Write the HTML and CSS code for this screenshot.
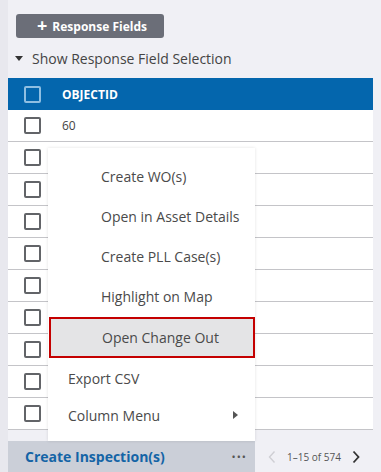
FILE: index.html
```html
<!DOCTYPE html>
<html lang="en">
<head>
    <meta charset="UTF-8">
    <meta name="viewport" content="width=device-width, initial-scale=1.0">
    <title>Response Grid</title>
    <link rel="stylesheet" href="styles.css">
</head>
<body>
    <div class="panel">
        <div class="toolbar">
            <button class="add-btn"><span class="plus">+</span> Response Fields</button>
        </div>
        <div class="toggle"><span class="caret"></span>Show Response Field Selection</div>

        <div class="grid">
            <div class="row head">
                <span class="check"></span>
                <span class="cell">OBJECTID</span>
            </div>
            <div class="row"><span class="check"></span><span class="cell">60</span></div>
            <div class="row"><span class="check"></span><span class="cell"></span></div>
            <div class="row"><span class="check"></span><span class="cell"></span></div>
            <div class="row"><span class="check"></span><span class="cell"></span></div>
            <div class="row"><span class="check"></span><span class="cell"></span></div>
            <div class="row"><span class="check"></span><span class="cell"></span></div>
            <div class="row"><span class="check"></span><span class="cell"></span></div>
            <div class="row"><span class="check"></span><span class="cell"></span></div>
            <div class="row"><span class="check"></span><span class="cell"></span></div>
            <div class="row"><span class="check"></span><span class="cell"></span></div>
        </div>

        <div class="footer">
            <div class="actions">
                <span class="create">Create Inspection(s)</span>
                <span class="more">&bull;&bull;&bull;</span>
            </div>
            <div class="pager">
                <svg class="prev" width="8" height="14" viewBox="0 0 8 14"><path d="M6.5 1.5 1.5 7l5 5.5" fill="none" stroke="#cfcfd4" stroke-width="1.4"/></svg>
                <span class="count">1&ndash;15 of 574</span>
                <svg class="next" width="8" height="14" viewBox="0 0 8 14"><path d="M1.5 1.5 6.5 7l-5 5.5" fill="none" stroke="#333" stroke-width="1.8"/></svg>
            </div>
        </div>

        <!-- context menu -->
        <div class="menu">
            <div class="item">Create WO(s)</div>
            <div class="item">Open in Asset Details</div>
            <div class="item">Create PLL Case(s)</div>
            <div class="item">Highlight on Map</div>
            <div class="item active">Open Change Out</div>
            <div class="item plain">Export CSV</div>
            <div class="item plain sub">Column Menu <span class="arrow"></span></div>
        </div>
    </div>
</body>
</html>
```

FILE: styles.css
```css
body {
    margin: 0;
    background-color: #e8e8ee;
    font-family: "Open Sans", "Liberation Sans", sans-serif;
    color: #444;
    overflow: hidden;
}
.panel {
    position: relative;
    margin-left: 8px;
    height: 472px;
    background-color: #f0f0f5;
    display: flex;
    flex-direction: column;
}
.toolbar {
    padding: 14px 0 0 8px;
}
.add-btn {
    width: 148px;
    height: 24px;
    background-color: #6b6e78;
    color: white;
    border: none;
    border-radius: 3px;
    font-family: "Open Sans", sans-serif;
    font-weight: bold;
    font-size: 12px;
    padding: 0 0 0 4px;
    display: flex;
    align-items: center;
    justify-content: center;
    gap: 5px;
}
.plus {
    font-size: 18px;
    font-weight: bold;
    line-height: 1;
    margin-top: -2px;
}
.toggle {
    height: 40px;
    display: flex;
    align-items: center;
    font-size: 14px;
    color: #444;
    padding-left: 7px;
}
.caret {
    width: 0;
    height: 0;
    border-left: 4.5px solid transparent;
    border-right: 4.5px solid transparent;
    border-top: 5px solid #333;
    margin-right: 9px;
}
.grid {
    width: 365px;
    background-color: white;
}
.row {
    height: 32px;
    box-sizing: border-box;
    border-bottom: 1px solid #c4c4c8;
    display: flex;
    align-items: center;
    padding-left: 16px;
}
.row.head {
    background-color: #0466ad;
    border-bottom: none;
    color: white;
    font-weight: bold;
}
.check {
    width: 17px;
    height: 17px;
    box-sizing: border-box;
    border: 2px solid #626468;
    border-radius: 2px;
    margin-right: 21px;
}
.head .check {
    border-color: #8fbfe2;
}
.cell {
    font-size: 12px;
}
.footer {
    margin-top: auto;
    height: 31px;
    display: flex;
}
.actions {
    width: 247px;
    background-color: #cbcfd8;
    display: flex;
    align-items: center;
    justify-content: space-between;
    padding: 0 8px 0 17px;
    box-sizing: border-box;
}
.create {
    color: #1464a6;
    font-weight: bold;
    font-size: 14px;
}
.more {
    color: #555;
    font-size: 11px;
    letter-spacing: 1px;
}
.pager {
    display: flex;
    align-items: center;
    padding-left: 13px;
    font-size: 10px;
    color: #555;
}
.prev {
    margin-right: 11px;
}
.next {
    margin-left: 11px;
}
.menu {
    position: absolute;
    left: 40px;
    top: 148px;
    width: 207px;
    height: 293px;
    background-color: white;
    box-shadow: 0 0 3px rgba(0, 0, 0, 0.12);
    padding-top: 8px;
    box-sizing: border-box;
}
.item {
    height: 40px;
    display: flex;
    align-items: center;
    padding-left: 53px;
    font-size: 14px;
    color: #4a4a4a;
    box-sizing: border-box;
}
.item.active {
    height: 41px;
    margin-top: 1px;
    background-color: #e4e4e6;
    border: 2px solid #c40000;
    padding-left: 51px;
    margin-left: 1px;
}
.item.plain {
    padding-left: 20px;
}
.item.sub {
    height: 34px;
    justify-content: space-between;
    padding-right: 17px;
}
.arrow {
    width: 0;
    height: 0;
    border-top: 4.5px solid transparent;
    border-bottom: 4.5px solid transparent;
    border-left: 5px solid #555;
}
```
